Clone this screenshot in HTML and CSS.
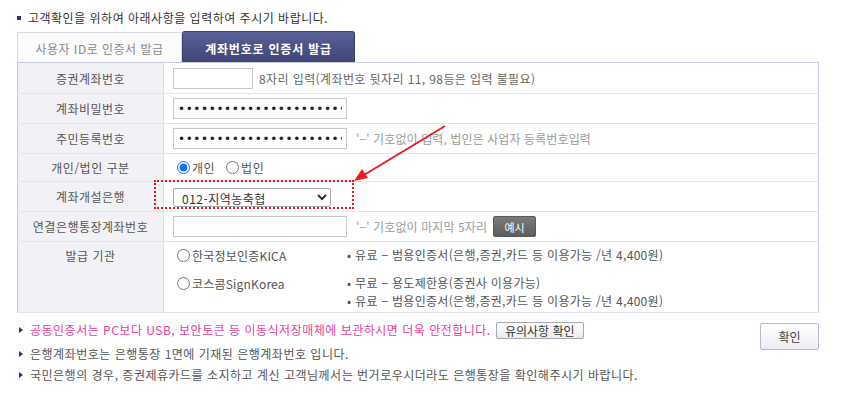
FILE: index.html
```html
<!DOCTYPE html>
<html lang="ko">
<head>
<meta charset="utf-8">
<link rel="stylesheet" href="styles.css">
</head>
<body>
<div class="page">
  <p class="intro"><span class="sq"></span>고객확인을 위하여 아래사항을 입력하여 주시기 바랍니다.</p>
  <div class="tabs">
    <div class="tab">사용자 ID로 인증서 발급</div>
    <div class="tab active">계좌번호로 인증서 발급</div>
  </div>
  <table class="form">
    <tr class="r1">
      <th>증권계좌번호</th>
      <td><input class="in short" type="text" value=""><span class="help dark">8자리 입력(계좌번호 뒷자리 11, 98등은 입력 불필요)</span></td>
    </tr>
    <tr class="r2">
      <th>계좌비밀번호</th>
      <td><input class="in long pw" type="password" value="abcdefghijklmnopqrstuvwxyzab"></td>
    </tr>
    <tr class="r3">
      <th>주민등록번호</th>
      <td><input class="in long pw" type="password" value="abcdefghijklmnopqrstuvwx"><span class="help">'−' 기호없이 입력, 법인은 사업자 등록번호입력</span></td>
    </tr>
    <tr class="r4">
      <th>개인/법인 구분</th>
      <td><label class="rad"><input type="radio" name="t" checked>개인</label><label class="rad"><input type="radio" name="t">법인</label></td>
    </tr>
    <tr class="r5">
      <th>계좌개설은행</th>
      <td><select class="bank"><option>012-지역농축협</option></select></td>
    </tr>
    <tr class="r6">
      <th>연결은행통장계좌번호</th>
      <td><input class="in long" type="text" value=""><span class="help">'−' 기호없이 마지막 5자리</span><button class="ex">예시</button></td>
    </tr>
    <tr class="r7">
      <th>발급 기관</th>
      <td>
        <div class="issuers">
          <label class="rad"><input type="radio" name="c">한국정보인증KICA</label>
          <div class="desc"><p>• 유료 − 범용인증서(은행,증권,카드 등 이용가능 /년 4,400원)</p></div>
          <label class="rad"><input type="radio" name="c">코스콤SignKorea</label>
          <div class="desc"><p>• 무료 − 용도제한용(증권사 이용가능)</p><p>• 유료 − 범용인증서(은행,증권,카드 등 이용가능 /년 4,400원)</p></div>
        </div>
      </td>
    </tr>
  </table>
  <div class="bottom">
    <ul class="notes">
      <li class="pink">공동인증서는 PC보다 USB, 보안토큰 등 이동식저장매체에 보관하시면 더욱 안전합니다.<button class="chk">유의사항 확인</button></li>
      <li>은행계좌번호는 은행통장 1면에 기재된 은행계좌번호 입니다.</li>
      <li>국민은행의 경우, 증권제휴카드를 소지하고 계신 고객님께서는 번거로우시더라도 은행통장을 확인해주시기 바랍니다.</li>
    </ul>
    <button class="ok">확인</button>
  </div>
  <div class="mark"></div>
  <svg class="arrow" width="100" height="70" viewBox="0 0 100 70">
    <line x1="95" y1="4" x2="14" y2="53" stroke="#ee1c1c" stroke-width="2"/>
    <polygon points="4,59 12,47 18,56" fill="#ee1c1c"/>
  </svg>
</div>
</body>
</html>
```
FILE: styles.css
```css
* { box-sizing: border-box; }
body {
  margin: 0;
  background: #fff;
  font-family: "Noto Sans CJK KR", "Noto Sans", sans-serif;
  font-size: 12px;
  letter-spacing: 0.5px;
  color: #555;
}
.page {
  position: relative;
  width: 851px;
  height: 402px;
  padding: 10px 0 0 17px;
}
.intro {
  margin: 0;
  height: 16px;
  line-height: 16px;
  color: #333;
  display: flex;
  align-items: center;
}
.sq {
  display: inline-block;
  width: 4px;
  height: 4px;
  background: #2a3570;
  margin-right: 7px;
}
.tabs {
  display: flex;
  margin-top: 5px;
  height: 31px;
  align-items: flex-end;
}
.tab {
  width: 165px;
  height: 30px;
  border: 1px solid #d9d9e3;
  border-bottom: none;
  background: #fbfbfc;
  color: #8a8a8a;
  display: flex;
  align-items: center;
  justify-content: center;
  padding-top: 2px;
}
.tab.active {
  width: 173px;
  height: 31px;
  border: 1px solid #3a4070;
  border-bottom: none;
  border-radius: 3px 3px 0 0;
  background: linear-gradient(#5a6196, #3e4478);
  color: #fff;
  font-weight: bold;
  letter-spacing: 0.8px;
}
.form {
  width: 802px;
  border-collapse: collapse;
  border: 1px solid #c8c9de;
}
.form th {
  width: 146px;
  background: #f2f2f6;
  font-weight: normal;
  color: #555;
  text-align: center;
  border-right: 1px solid #dfe0e8;
  border-bottom: 1px solid #e3e3ea;
  padding: 0;
}
.form td {
  padding: 0 0 0 9px;
  border-bottom: 1px solid #e3e3ea;
  white-space: nowrap;
}
.r1 { height: 31px; }
.r2, .r3, .r5, .r6 { height: 30px; }
.r4 { height: 28px; }
.r7 { height: 71px; }
.r7 th, .r7 td { vertical-align: top; }
.r7 th { padding-top: 5px; }
.in {
  height: 21px;
  border: 1px solid #c8c8c8;
  vertical-align: middle;
  font-family: "DejaVu Sans", sans-serif;
  font-size: 10px;
  padding: 0 4px;
  color: #333;
  outline: none;
}
.in.short { width: 80px; }
.in.long { width: 174px; }
.pw {
  font-size: 12px;
  letter-spacing: 0.6px;
  color: #222;
}
.help {
  margin-left: 9px;
  color: #9a9a9a;
  letter-spacing: 0.1px;
  vertical-align: middle;
}
.help.dark { margin-left: 6px; color: #666; letter-spacing: 0.4px; }
.rad {
  display: inline-flex;
  align-items: center;
  color: #555;
  margin-right: 7px;
}
.rad input {
  width: 13px;
  height: 13px;
  margin: 0 2px 0 4px;
  accent-color: #1a73e8;
}
.bank {
  width: 158px;
  height: 19px;
  border: 1px solid #a9a9a9;
  border-radius: 2px;
  background: #fff;
  font-family: "Noto Sans CJK KR", sans-serif;
  font-size: 12px;
  letter-spacing: 0.5px;
  color: #333;
  padding: 0 4px;
  vertical-align: middle;
}
.ex {
  margin-left: 6px;
  width: 43px;
  height: 21px;
  border: 1px solid #5a5a5a;
  border-radius: 2px;
  background: linear-gradient(#7a7a7a, #5e5e5e);
  color: #fff;
  font-family: "Noto Sans CJK KR", sans-serif;
  font-size: 11px;
  vertical-align: middle;
  padding: 0;
}
.issuers {
  display: grid;
  grid-template-columns: 174px auto;
  row-gap: 10px;
  padding-top: 4px;
  color: #555;
}
.issuers .rad { align-self: start; height: 18px; letter-spacing: 0.2px; }
.desc p { margin: 0; line-height: 18px; letter-spacing: 0.3px; }
.bottom {
  display: flex;
  justify-content: space-between;
  align-items: flex-start;
  width: 802px;
  padding-top: 9px;
}
.notes {
  list-style: none;
  margin: 0;
  padding: 0;
}
.notes li {
  position: relative;
  padding-left: 13px;
  height: 21px;
  line-height: 21px;
  color: #555;
}
.notes li.pink {
  color: #e8409a;
  height: 21px;
  line-height: 16px;
  padding-top: 0;
}
.notes li::before {
  content: "";
  position: absolute;
  left: 2px;
  top: 8px;
  border-left: 4px solid #2a3570;
  border-top: 3px solid transparent;
  border-bottom: 3px solid transparent;
}
.notes li.pink::before { top: 5px; }
.chk {
  margin-left: 5px;
  width: 88px;
  height: 17px;
  border: 1px solid #a8a8b0;
  border-radius: 2px;
  background: linear-gradient(#fff, #ececef);
  font-family: "Noto Sans CJK KR", sans-serif;
  font-size: 12px;
  color: #333;
  padding: 0;
  line-height: 14px;
  vertical-align: top;
}
.ok {
  margin-top: 1px;
  width: 59px;
  height: 27px;
  border: 1px solid #b6b9cc;
  border-radius: 2px;
  background: linear-gradient(#fff, #eceef4);
  font-family: "Noto Sans CJK KR", sans-serif;
  font-size: 12px;
  color: #444;
}
.mark {
  position: absolute;
  left: 154px;
  top: 180px;
  width: 200px;
  height: 29px;
  border: 2px dotted #e8141e;
}
.arrow {
  position: absolute;
  left: 350px;
  top: 122px;
}
```
